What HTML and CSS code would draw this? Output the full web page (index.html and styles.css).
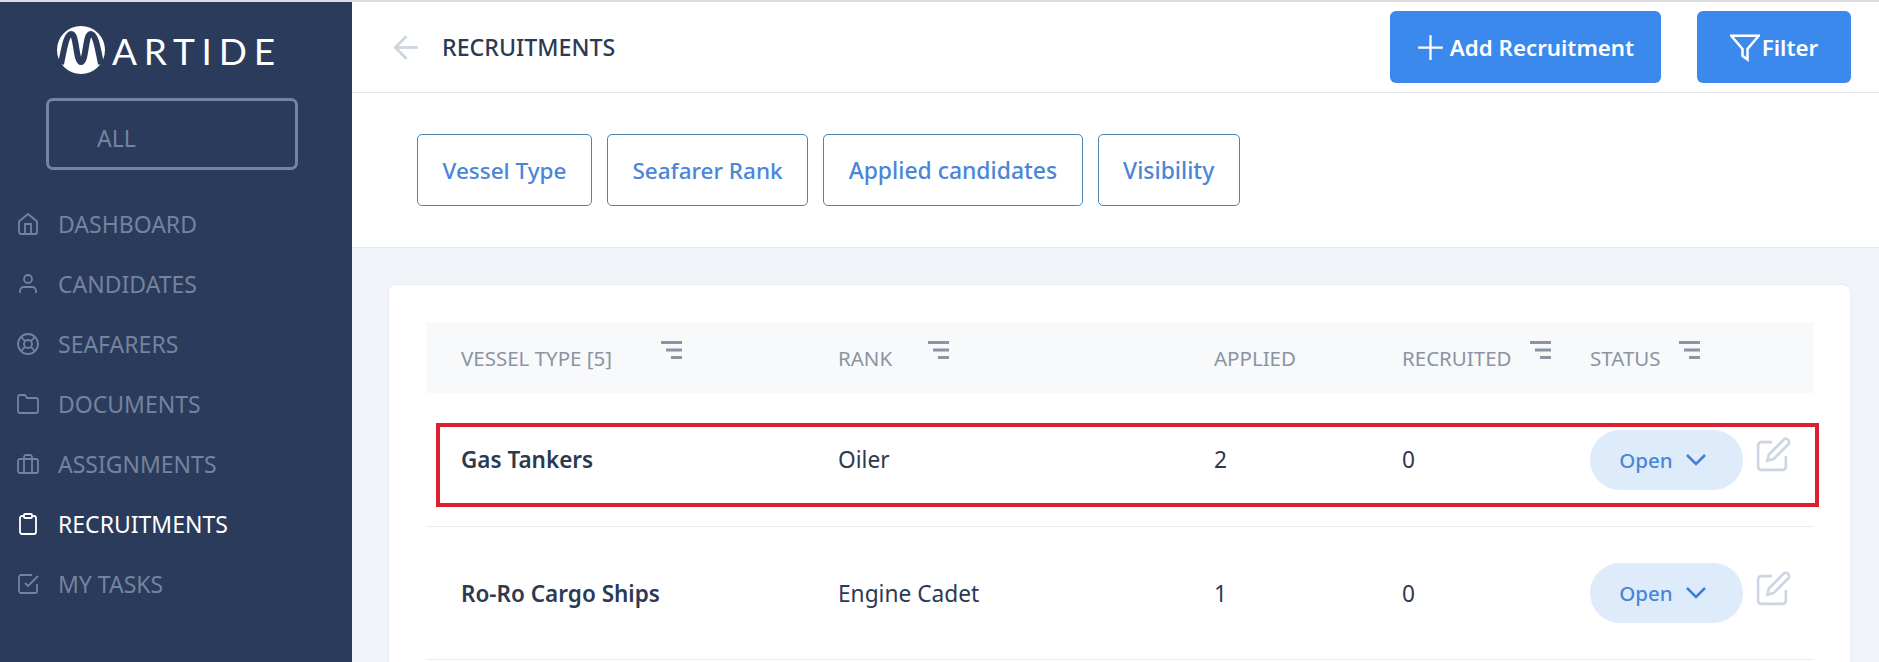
FILE: index.html
```html
<!DOCTYPE html>
<html lang="en">
<head>
    <meta charset="UTF-8">
    <title>Martide - Recruitments</title>
    <link rel="stylesheet" href="styles.css">
</head>
<body>
    <div class="app">
        <aside class="sidebar">
            <div class="logo">
                <svg class="logo-mark" viewBox="0 0 48 48">
                    <circle cx="24" cy="24" r="24" fill="#fff"/>
                    <path d="M4 38C7 24 9 8 14.500 8c5 0 4.500 28 9.500 28s4.500-28 9.500-28C39 8 41 24 44 38" fill="none" stroke="#2a3b5b" stroke-width="6"/>
                </svg>
                <span class="logo-text">ARTIDE</span>
            </div>
            <div class="company-select">ALL</div>
            <nav class="nav">
                <a class="nav-item" href="#">
                    <svg class="icon" viewBox="0 0 24 24"><path d="M3 9.500 12 2l9 7.500V20a2 2 0 0 1-2 2H5a2 2 0 0 1-2-2z"/><path d="M9 22v-10h6v10"/></svg>
                    DASHBOARD
                </a>
                <a class="nav-item" href="#">
                    <svg class="icon" viewBox="0 0 24 24"><path d="M20 21v-2a4 4 0 0 0-4-4H8a4 4 0 0 0-4 4v2"/><circle cx="12" cy="7" r="4"/></svg>
                    CANDIDATES
                </a>
                <a class="nav-item" href="#">
                    <svg class="icon" viewBox="0 0 24 24"><circle cx="12" cy="12" r="10"/><circle cx="12" cy="12" r="4"/><path d="m4.930 4.930 4.240 4.240M14.830 14.830l4.240 4.240M14.830 9.170l4.240-4.240M4.930 19.070l4.240-4.240"/></svg>
                    SEAFARERS
                </a>
                <a class="nav-item" href="#">
                    <svg class="icon" viewBox="0 0 24 24"><path d="M22 19a2 2 0 0 1-2 2H4a2 2 0 0 1-2-2V5a2 2 0 0 1 2-2h5l2 3h9a2 2 0 0 1 2 2z"/></svg>
                    DOCUMENTS
                </a>
                <a class="nav-item" href="#">
                    <svg class="icon" viewBox="0 0 24 24"><rect x="2" y="7" width="20" height="14" rx="2"/><path d="M16 21V5a2 2 0 0 0-2-2h-4a2 2 0 0 0-2 2v16"/></svg>
                    ASSIGNMENTS
                </a>
                <a class="nav-item active" href="#">
                    <svg class="icon" viewBox="0 0 24 24"><path d="M16 4h2a2 2 0 0 1 2 2v14a2 2 0 0 1-2 2H6a2 2 0 0 1-2-2V6a2 2 0 0 1 2-2h2"/><rect x="8" y="2" width="8" height="4" rx="1"/></svg>
                    RECRUITMENTS
                </a>
                <a class="nav-item" href="#">
                    <svg class="icon" viewBox="0 0 24 24"><path d="m9 11 3 3L22 4"/><path d="M21 12v7a2 2 0 0 1-2 2H5a2 2 0 0 1-2-2V5a2 2 0 0 1 2-2h11"/></svg>
                    MY TASKS
                </a>
            </nav>
        </aside>

        <main class="main">
            <header class="topbar">
                <svg class="back" viewBox="0 0 24 24"><path d="M22 12H2"/><path d="m12 22-10-10L12 2"/></svg>
                <h1 class="title">RECRUITMENTS</h1>
                <a class="btn btn-add" href="#">
                    <svg class="btn-icon plus" viewBox="0 0 24 24"><path d="M12 1v22M1 12h22"/></svg>
                    Add Recruitment
                </a>
                <a class="btn btn-filter" href="#">
                    <svg class="btn-icon" viewBox="0 0 24 24"><path d="M23 3H1l9 10.500V19l4 3v-8.500z"/></svg>
                    Filter
                </a>
            </header>

            <section class="chips">
                <a class="chip" href="#">Vessel Type</a>
                <a class="chip" href="#">Seafarer Rank</a>
                <a class="chip chip-large" href="#">Applied candidates</a>
                <a class="chip chip-large" href="#">Visibility</a>
            </section>

            <section class="content">
                <div class="card">
                    <div class="grid table-head">
                        <div class="th">VESSEL TYPE [5]<svg class="sort sort-wide" viewBox="0 0 21 18"><path d="M0 1.500h21M5 9h16M10 16.500h11"/></svg></div>
                        <div class="th">RANK<svg class="sort sort-mid" viewBox="0 0 21 18"><path d="M0 1.500h21M5 9h16M10 16.500h11"/></svg></div>
                        <div class="th">APPLIED</div>
                        <div class="th">RECRUITED<svg class="sort" viewBox="0 0 21 18"><path d="M0 1.500h21M5 9h16M10 16.500h11"/></svg></div>
                        <div class="th">STATUS<svg class="sort" viewBox="0 0 21 18"><path d="M0 1.500h21M5 9h16M10 16.500h11"/></svg></div>
                    </div>

                    <div class="grid row">
                        <div class="vessel">Gas Tankers</div>
                        <div>Oiler</div>
                        <div>2</div>
                        <div>0</div>
                        <div class="status">
                            <a class="pill" href="#">Open <svg class="chevron" viewBox="0 0 24 24"><path d="m3 7 9 9 9-9"/></svg></a>
                            <svg class="edit" viewBox="0 0 24 24"><path d="M11 4H4a2 2 0 0 0-2 2v14a2 2 0 0 0 2 2h14a2 2 0 0 0 2-2v-7"/><path d="M18.500 2.500a2.121 2.121 0 0 1 3 3L12 15l-4 1 1-4z"/></svg>
                        </div>
                        <div class="highlight"></div>
                    </div>

                    <div class="grid row">
                        <div class="vessel">Ro-Ro Cargo Ships</div>
                        <div>Engine Cadet</div>
                        <div>1</div>
                        <div>0</div>
                        <div class="status">
                            <a class="pill" href="#">Open <svg class="chevron" viewBox="0 0 24 24"><path d="m3 7 9 9 9-9"/></svg></a>
                            <svg class="edit" viewBox="0 0 24 24"><path d="M11 4H4a2 2 0 0 0-2 2v14a2 2 0 0 0 2 2h14a2 2 0 0 0 2-2v-7"/><path d="M18.500 2.500a2.121 2.121 0 0 1 3 3L12 15l-4 1 1-4z"/></svg>
                        </div>
                    </div>
                </div>
            </section>
        </main>
    </div>
</body>
</html>
```

FILE: styles.css
```css
* {
    box-sizing: border-box;
}
html, body {
    height: 100%;
}
body {
    margin: 0;
    overflow: hidden;
    font-family: "Noto Sans", sans-serif;
    color: #2b3a52;
    background: #fff;
}
a {
    text-decoration: none;
}
.app {
    display: flex;
    height: 100%;
    border-top: 2px solid #d9dce1;
}

/* sidebar */
.sidebar {
    width: 352px;
    flex-shrink: 0;
    background: #2a3b5b;
}
.logo {
    display: flex;
    align-items: center;
    height: 48px;
    margin: 24px 0 0 57px;
}
.logo-mark {
    width: 48px;
    height: 48px;
}
.logo-text {
    margin-left: 7px;
    font-family: Lato, sans-serif;
    font-size: 37px;
    letter-spacing: 6.800px;
    color: #fff;
}
.company-select {
    width: 252px;
    height: 72px;
    margin: 24px 0 0 46px;
    padding: 23px 0 0 48px;
    border: 3px solid #75849f;
    border-radius: 7px;
    font-size: 23px;
    line-height: 28px;
    color: #75849f;
}
.nav {
    margin-top: 24px;
}
.nav-item {
    display: flex;
    align-items: center;
    gap: 18px;
    height: 60px;
    padding-left: 16px;
    font-size: 23px;
    color: #74839e;
}
.nav-item.active {
    color: #fff;
}
.icon {
    width: 24px;
    height: 24px;
    fill: none;
    stroke: currentColor;
    stroke-width: 1.800;
}

/* top bar */
.main {
    flex: 1;
    display: flex;
    flex-direction: column;
    min-width: 0;
}
.topbar {
    display: flex;
    align-items: center;
    height: 91px;
    padding: 0 28px 0 41px;
    border-bottom: 1px solid #e6e8ec;
}
.back {
    width: 27px;
    height: 27px;
    fill: none;
    stroke: #ccd4e2;
    stroke-width: 2.400;
}
.title {
    flex: 1;
    margin: 0 0 0 22px;
    font-size: 23.200px;
    font-weight: 500;
}
.btn {
    display: flex;
    align-items: center;
    justify-content: center;
    height: 72px;
    border-radius: 6px;
    background: #3b89ec;
    color: #fff;
    font-size: 22.300px;
    font-weight: 600;
}
.btn-add {
    width: 271px;
    gap: 6px;
}
.btn-filter {
    width: 154px;
    margin-left: 36px;
    gap: 2px;
}
.btn-icon {
    width: 30px;
    height: 30px;
    fill: none;
    stroke: #fff;
    stroke-width: 2;
}
.plus {
    width: 27px;
    height: 27px;
}

/* filter chips */
.chips {
    display: flex;
    gap: 15px;
    height: 155px;
    padding: 41px 0 0 65px;
    border-bottom: 1px solid #e6e8ec;
}
.chip {
    display: flex;
    align-items: center;
    height: 72px;
    padding: 1px 24.500px 0;
    border: 1px solid #4e83ad;
    border-radius: 5px;
    font-size: 22.500px;
    font-weight: 500;
    color: #4a86d8;
}
.chip-large {
    font-size: 22.900px;
}

/* table */
.content {
    flex: 1;
    padding: 36px 28px 0 36px;
    background: #f0f4f8;
}
.card {
    height: 100%;
    padding: 37px 36px 0 37px;
    border: 1px solid #e8edf3;
    border-bottom: 0;
    border-radius: 8px 8px 0 0;
    background: #fff;
}
.grid {
    display: grid;
    grid-template-columns: 377px 376px 188px 188px 1fr;
    padding-left: 35px;
    align-items: center;
}
.table-head {
    height: 71px;
    background: #f7f9fb;
}
.th {
    display: flex;
    align-items: center;
    font-size: 20.500px;
    color: #8b94a3;
}
.sort {
    width: 21px;
    height: 18px;
    margin: -15px 0 0 18px;
    fill: none;
    stroke: #8b94a3;
    stroke-width: 3;
}
.sort-wide {
    margin-left: 49px;
}
.sort-mid {
    margin-left: 36px;
}
.row {
    position: relative;
    height: 133px;
    border-bottom: 1px solid #e9edf2;
    font-size: 22.700px;
}
.table-head + .row {
    height: 134px;
}
.vessel {
    font-weight: 600;
    font-size: 22.500px;
}
.status {
    display: flex;
    align-items: center;
    gap: 12px;
}
.pill {
    display: flex;
    align-items: center;
    justify-content: center;
    gap: 11px;
    width: 153px;
    height: 60px;
    padding-right: 6px;
    flex-shrink: 0;
    border-radius: 30px;
    background: #deebfa;
    color: #4a86d8;
    font-size: 20.500px;
    font-weight: 500;
}
.chevron {
    width: 24px;
    height: 24px;
    fill: none;
    stroke: #3f7fd6;
    stroke-width: 2.600;
}
.edit {
    width: 37px;
    height: 37px;
    margin-top: -10px;
    fill: none;
    stroke: #ccd5e3;
    stroke-width: 1.700;
}
.highlight {
    position: absolute;
    top: 30px;
    left: 10px;
    right: -5px;
    height: 84px;
    border: 4.500px solid #dc2030;
}
```
